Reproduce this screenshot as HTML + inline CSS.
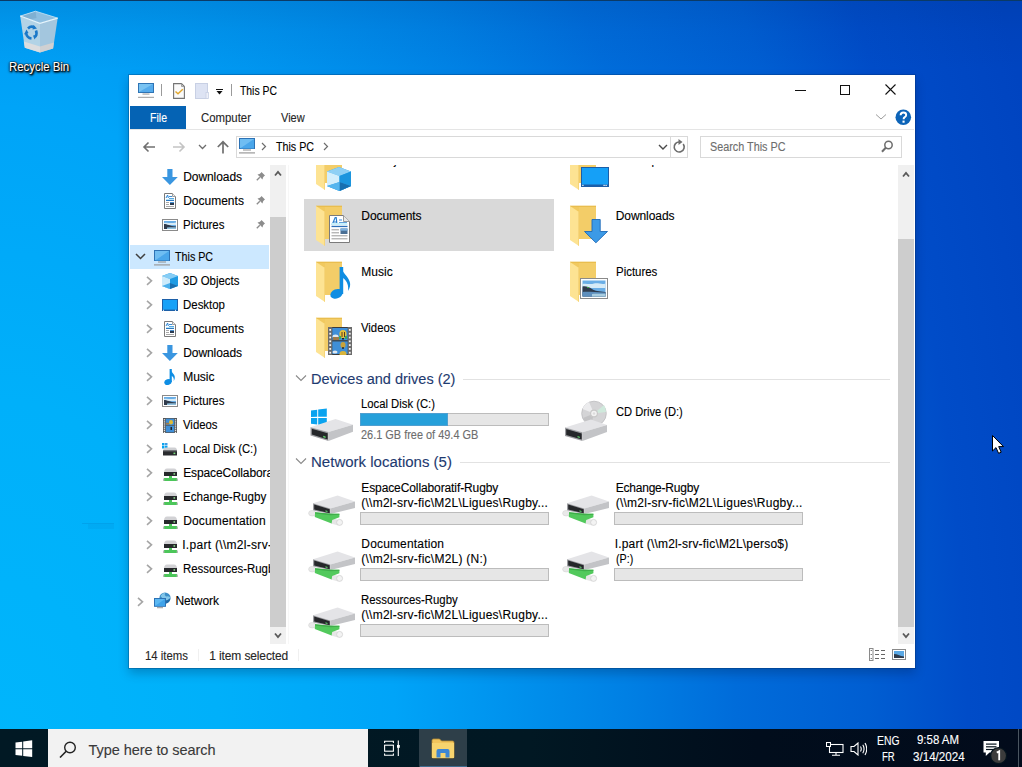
<!DOCTYPE html>
<html><head><meta charset="utf-8"><style>
html,body{margin:0;padding:0;width:1022px;height:767px;overflow:hidden;position:relative;font-family:"Liberation Sans",sans-serif;}
body{background:#0a7fd8;}
.abs{position:absolute;}
.tx{position:absolute;line-height:1;white-space:nowrap;font-family:"Liberation Sans",sans-serif;-webkit-text-stroke:0.12px currentColor;}
.clipx{position:absolute;top:0;height:767px;overflow:hidden;}
.clipy{position:absolute;left:0;width:1022px;height:600px;overflow:hidden;}
#bg{position:absolute;left:0;top:0;width:1022px;height:729px;
 background:linear-gradient(180deg,rgba(0,30,80,0.10) 0px,rgba(0,30,80,0.04) 30px,rgba(0,30,80,0) 70px),radial-gradient(1100px 1833px at 0px 767px,rgb(0,182,252) 0%,rgb(0,176,250) 20%,rgb(0,170,249) 28%,rgb(0,164,248) 36%,rgb(0,140,234) 50%,rgb(0,128,228) 57%,rgb(0,108,218) 67%,rgb(0,94,210) 79%,rgb(0,76,200) 88%,rgb(0,68,192) 100%);}
#win{position:absolute;left:129px;top:75px;width:786px;height:593px;background:#fff;box-shadow:0 0 0 1px rgba(0,40,90,0.28),0 5px 10px rgba(0,20,60,0.28);}
#taskbar{position:absolute;left:0;top:729px;width:1022px;height:38px;background:linear-gradient(90deg,#011924 0%,#011823 52%,#010d1c 74%,#020b1b 100%);}
#topline{position:absolute;left:0;top:0;width:1022px;height:1px;background:#0b3a66;}

</style></head><body>
<div id="bg"></div>
<div id="topline"></div>
<div class="abs" style="left:82px;top:523px;width:32px;height:1px;background:rgba(0,60,130,0.12)"></div>
<div class="abs" style="left:88px;top:524px;width:26px;height:5px;background:rgba(0,60,130,0.06)"></div>
<div id="win"></div>
<div id="taskbar"></div>
<!-- ribbon -->
<div class="abs" style="left:130px;top:106px;width:56px;height:23px;background:#0563b4"></div>
<div class="abs" style="left:130px;top:129px;width:784px;height:1px;background:#e5e5e5"></div>
<!-- address box -->
<div class="abs" style="left:236px;top:136px;width:450px;height:20px;border:1px solid #d9d9d9"></div>
<div class="abs" style="left:670px;top:137px;width:1px;height:20px;background:#d9d9d9"></div>
<div class="abs" style="left:700px;top:136px;width:200px;height:20px;border:1px solid #d9d9d9"></div>
<!-- nav scrollbar -->
<div class="abs" style="left:270px;top:165px;width:16px;height:479px;background:#f0f0f0"></div>
<div class="abs" style="left:270px;top:217px;width:16px;height:410px;background:#cdcdcd"></div>
<div class="abs" style="left:288px;top:165px;width:1px;height:479px;background:#f7f7f7"></div>
<!-- right scrollbar -->
<div class="abs" style="left:898px;top:165px;width:16px;height:479px;background:#f0f0f0"></div>
<div class="abs" style="left:898px;top:239px;width:16px;height:388px;background:#cdcdcd"></div>
<!-- nav selection -->
<div class="abs" style="left:130px;top:245px;width:139px;height:24px;background:#cce8ff"></div>
<!-- selected tile -->
<div class="abs" style="left:304px;top:199px;width:250px;height:52px;background:#d9d9d9"></div>
<!-- group lines -->
<div class="abs" style="left:463px;top:379px;width:427px;height:1px;background:#e2e2e2"></div>
<div class="abs" style="left:460px;top:462px;width:430px;height:1px;background:#e2e2e2"></div>
<!-- bars -->
<div class="abs" style="left:360px;top:413px;width:187px;height:11px;border:1px solid #bcbcbc;background:#e6e6e6"></div>
<div class="abs" style="left:360px;top:413px;width:88px;height:13px;background:#26a0da;box-shadow:inset 0 0 0 1px #4f9fd0"></div>
<div class="abs" style="left:360px;top:512px;width:187px;height:11px;border:1px solid #bcbcbc;background:#e6e6e6"></div>
<div class="abs" style="left:614px;top:512px;width:187px;height:11px;border:1px solid #bcbcbc;background:#e6e6e6"></div>
<div class="abs" style="left:360px;top:568px;width:187px;height:11px;border:1px solid #bcbcbc;background:#e6e6e6"></div>
<div class="abs" style="left:614px;top:568px;width:187px;height:11px;border:1px solid #bcbcbc;background:#e6e6e6"></div>
<div class="abs" style="left:360px;top:624px;width:187px;height:11px;border:1px solid #bcbcbc;background:#e6e6e6"></div>
<!-- status separators -->
<div class="abs" style="left:198px;top:649px;width:1px;height:12px;background:#f0f0f0"></div>
<div class="abs" style="left:298px;top:649px;width:1px;height:12px;background:#f0f0f0"></div>
<!-- taskbar -->
<div class="abs" style="left:48px;top:729px;width:320px;height:38px;background:#f2f2f2"></div>
<div class="abs" style="left:419px;top:729px;width:48px;height:38px;background:#2e3f49"></div>

<svg class="abs" style="left:138px;top:82px;" width="16" height="17" viewBox="0 0 16 17">
      <rect x="0.5" y="1.5" width="15" height="9" fill="#79c3f2" stroke="#2f74b5"/>
      <polygon points="1,10 15,2 15,10" fill="#55abec"/>
      <rect x="4.5" y="11.6" width="7" height="0.9" fill="#8d8d8d"/>
      <rect x="0" y="14.8" width="16" height="1" fill="#9a9a9a"/></svg>
<svg class="abs" style="left:161px;top:84px;" width="1" height="12" viewBox="0 0 1 12"><rect width="1" height="12" fill="#9a9a9a"/></svg>
<svg class="abs" style="left:173px;top:83px;" width="13" height="17" viewBox="0 0 13 17">
      <path d="M0.6 0.6 H8.5 L11.4 3.5 V15.4 H0.6 Z" fill="#fafafa" stroke="#737373" stroke-width="1.1"/>
      <path d="M8.5 0.6 V3.5 H11.4" fill="none" stroke="#9a9a9a" stroke-width="0.9"/>
      <path d="M2.5 8.5 L5 10.8 L9.8 6.2" fill="none" stroke="#e0a52a" stroke-width="1.4"/></svg>
<svg class="abs" style="left:195px;top:83px;" width="14" height="17" viewBox="0 0 14 17">
      <rect x="0.5" y="0.5" width="12" height="15" fill="#dde3f3" stroke="#c8d0e4"/>
      <rect x="11" y="9.5" width="2.5" height="6" fill="#eef0f8" stroke="#c8d0e4" stroke-width="0.8"/></svg>
<svg class="abs" style="left:215px;top:87px;" width="9" height="9" viewBox="0 0 9 9"><rect x="1" y="2" width="7" height="1" fill="#111"/><polygon points="1.5,4 7.5,4 4.5,7.6" fill="#111"/></svg>
<svg class="abs" style="left:231px;top:84px;" width="1" height="12" viewBox="0 0 1 12"><rect width="1" height="12" fill="#9a9a9a"/></svg>
<svg class="abs" style="left:795px;top:89px;" width="11" height="2" viewBox="0 0 11 2"><rect x="0" y="1" width="11" height="1" fill="#111"/></svg>
<svg class="abs" style="left:839px;top:84px;" width="12" height="12" viewBox="0 0 12 12"><rect x="1.5" y="1.5" width="9" height="9" fill="none" stroke="#111"/></svg>
<svg class="abs" style="left:884px;top:83px;" width="13" height="13" viewBox="0 0 13 13"><path d="M1.5 1.5 L11.5 11.5 M11.5 1.5 L1.5 11.5" stroke="#111" stroke-width="1.1"/></svg>
<svg class="abs" style="left:875px;top:113px;" width="12" height="8" viewBox="0 0 12 8"><path d="M1 1.5 L6 6 L11 1.5" fill="none" stroke="#9c9c9c" stroke-width="1"/></svg>
<svg class="abs" style="left:895px;top:109px;" width="17" height="17" viewBox="0 0 17 17"><circle cx="8.3" cy="8.3" r="7.8" fill="#0d64b8"/>
      <path d="M5.6 6.2 Q5.6 3.5 8.4 3.5 Q11.2 3.5 11.2 6 Q11.2 7.5 9.5 8.4 Q8.6 9 8.6 10.3" fill="none" stroke="#fff" stroke-width="1.9"/>
      <rect x="7.5" y="11.6" width="2.1" height="2.1" fill="#fff"/></svg>
<svg class="abs" style="left:142px;top:141px;" width="14" height="12" viewBox="0 0 14 12"><path d="M13 6 H2 M6.5 1.5 L2 6 L6.5 10.5" fill="none" stroke="#707070" stroke-width="1.6"/></svg>
<svg class="abs" style="left:172px;top:141px;" width="14" height="12" viewBox="0 0 14 12"><path d="M1 6 H12 M7.5 1.5 L12 6 L7.5 10.5" fill="none" stroke="#c4c4c4" stroke-width="1.6"/></svg>
<svg class="abs" style="left:198px;top:144px;" width="9" height="6" viewBox="0 0 9 6"><path d="M1 1 L4.5 4.5 L8 1" fill="none" stroke="#6d6d6d" stroke-width="1.3"/></svg>
<svg class="abs" style="left:216px;top:140px;" width="14" height="14" viewBox="0 0 14 14"><path d="M7 13.5 V2 M1.8 7 L7 1.8 L12.2 7" fill="none" stroke="#707070" stroke-width="1.7"/></svg>
<svg class="abs" style="left:239px;top:138px;" width="16" height="16" viewBox="0 0 16 16">
    <rect x="0.5" y="0.5" width="15" height="10" fill="#6fbdf2" stroke="#2d72b5"/>
    <polygon points="1,10.5 15,1 15,10.5" fill="#4aa6ea"/>
    <rect x="4" y="11.5" width="8" height="1" fill="#8d8d8d"/>
    <rect x="0" y="14.3" width="16" height="1.2" fill="#9a9a9a"/>
    </svg>
<svg class="abs" style="left:261px;top:142px;" width="6" height="9" viewBox="0 0 6 9"><path d="M1 1 L4.5 4.5 L1 8" fill="none" stroke="#6d6d6d" stroke-width="1.2"/></svg>
<svg class="abs" style="left:323px;top:142px;" width="6" height="9" viewBox="0 0 6 9"><path d="M1 1 L4.5 4.5 L1 8" fill="none" stroke="#6d6d6d" stroke-width="1.2"/></svg>
<svg class="abs" style="left:658px;top:144px;" width="10" height="7" viewBox="0 0 10 7"><path d="M1 1 L5 5 L9 1" fill="none" stroke="#4a4a4a" stroke-width="1.4"/></svg>
<svg class="abs" style="left:672px;top:139px;" width="15" height="16" viewBox="0 0 15 16"><path d="M11.2 5 A5 5 0 1 1 7.5 3" fill="none" stroke="#6d6d6d" stroke-width="1.6"/><polygon points="6.5,0 10.5,3 6.5,6" fill="#6d6d6d"/></svg>
<svg class="abs" style="left:881px;top:140px;" width="13" height="13" viewBox="0 0 13 13"><circle cx="7.5" cy="5" r="3.7" fill="none" stroke="#6d6d6d" stroke-width="1.5"/><path d="M5 7.5 L1 11.8" stroke="#6d6d6d" stroke-width="2"/></svg>
<svg class="abs" style="left:274px;top:170px;" width="8" height="7" viewBox="0 0 8 7"><path d="M1 5.5 L4 2 L7 5.5" fill="none" stroke="#5a5a5a" stroke-width="1.8"/></svg>
<svg class="abs" style="left:274px;top:632px;" width="8" height="7" viewBox="0 0 8 7"><path d="M1 1.5 L4 5 L7 1.5" fill="none" stroke="#5a5a5a" stroke-width="1.8"/></svg>
<svg class="abs" style="left:901.5px;top:170.5px;" width="8" height="7" viewBox="0 0 8 7"><path d="M1 5.5 L4 2 L7 5.5" fill="none" stroke="#5a5a5a" stroke-width="1.8"/></svg>
<svg class="abs" style="left:902px;top:632px;" width="8" height="7" viewBox="0 0 8 7"><path d="M1 1.5 L4 5 L7 1.5" fill="none" stroke="#5a5a5a" stroke-width="1.8"/></svg>
<svg class="abs" style="left:162px;top:169px;" width="16" height="16" viewBox="0 0 16 16">
    <path d="M5.3 0 H10.5 V8 H15.8 L7.9 16 L0 8 H5.3 Z" fill="#3a96e0"/>
    </svg>
<svg class="abs" style="left:164px;top:193px;" width="12" height="16" viewBox="0 0 12 16">
    <path d="M0.5 0.5 H8.5 L11.5 3.5 V15.5 H0.5 Z" fill="#fff" stroke="#7a7a7a"/>
    <path d="M8.5 0.5 V3.5 H11.5" fill="#eee" stroke="#a0a0a0" stroke-width="1"/>
    <path d="M2 5 L3.6 2 L4.4 5" stroke="#2a86d8" stroke-width="1" fill="none"/>
    <rect x="5" y="3" width="3" height="1" fill="#3d8bd3"/>
    <rect x="5" y="5" width="5" height="1" fill="#5aa8e0"/>
    <rect x="2" y="6" width="8" height="1" fill="#b8e4f8"/>
    <rect x="2" y="7" width="8" height="1" fill="#2c78c0"/>
    <rect x="2" y="9" width="3" height="1" fill="#a8a8a8"/>
    <rect x="2" y="11" width="3" height="1" fill="#a8a8a8"/>
    <rect x="6" y="9" width="4" height="1" fill="#4a90d0"/>
    <rect x="6" y="10" width="4" height="2" fill="#2a3a50"/>
    <rect x="2" y="13" width="8" height="1" fill="#a8a8a8"/>
    </svg>
<svg class="abs" style="left:162px;top:219px;" width="16" height="12" viewBox="0 0 16 12">
    <rect x="0.5" y="0.5" width="15" height="11" fill="#fff" stroke="#8a8a8a"/>
    <rect x="2" y="2" width="12" height="8" fill="#6aaee6"/>
    <path d="M2 4 C5 3 9 5 14 3.5 V6 H2 Z" fill="#d6ebf7"/>
    <path d="M2 5 C5 5 8 7 14 7.5 V10 H2 Z" fill="#2f3b4c"/>
    <path d="M5 8.5 C9 8 11 8.3 14 8.2 V10 H5 Z" fill="#8fbfdc"/>
    </svg>
<svg class="abs" style="left:256px;top:171px;" width="10" height="10" viewBox="0 0 10 10">
    <path d="M5.5 1 L9 4.5 L8 5.2 L7 6.5 L6.5 8.5 L1.5 3.5 L3.5 3 L4.8 2 Z" fill="#8c8c8c"/>
    <path d="M3.8 6.2 L0.8 9.2" stroke="#8c8c8c" stroke-width="1.3"/>
    </svg>
<svg class="abs" style="left:256px;top:195px;" width="10" height="10" viewBox="0 0 10 10">
    <path d="M5.5 1 L9 4.5 L8 5.2 L7 6.5 L6.5 8.5 L1.5 3.5 L3.5 3 L4.8 2 Z" fill="#8c8c8c"/>
    <path d="M3.8 6.2 L0.8 9.2" stroke="#8c8c8c" stroke-width="1.3"/>
    </svg>
<svg class="abs" style="left:256px;top:219px;" width="10" height="10" viewBox="0 0 10 10">
    <path d="M5.5 1 L9 4.5 L8 5.2 L7 6.5 L6.5 8.5 L1.5 3.5 L3.5 3 L4.8 2 Z" fill="#8c8c8c"/>
    <path d="M3.8 6.2 L0.8 9.2" stroke="#8c8c8c" stroke-width="1.3"/>
    </svg>
<svg class="abs" style="left:135px;top:253px;" width="11" height="7" viewBox="0 0 11 7"><path d="M1 1 L5.5 5.5 L10 1" fill="none" stroke="#404040" stroke-width="1.5"/></svg>
<svg class="abs" style="left:154px;top:249.5px;" width="16" height="16" viewBox="0 0 16 16">
    <rect x="0.5" y="0.5" width="15" height="10" fill="#6fbdf2" stroke="#2d72b5"/>
    <polygon points="1,10.5 15,1 15,10.5" fill="#4aa6ea"/>
    <rect x="4" y="11.5" width="8" height="1" fill="#8d8d8d"/>
    <rect x="0" y="14.3" width="16" height="1.2" fill="#9a9a9a"/>
    </svg>
<svg class="abs" style="left:145.5px;top:276.4px;" width="7" height="10" viewBox="0 0 7 10"><path d="M1 0.8 L5.5 4.8 L1 8.8" fill="none" stroke="#a6a6a6" stroke-width="1.6"/></svg>
<svg class="abs" style="left:145.5px;top:300.4px;" width="7" height="10" viewBox="0 0 7 10"><path d="M1 0.8 L5.5 4.8 L1 8.8" fill="none" stroke="#a6a6a6" stroke-width="1.6"/></svg>
<svg class="abs" style="left:145.5px;top:324.4px;" width="7" height="10" viewBox="0 0 7 10"><path d="M1 0.8 L5.5 4.8 L1 8.8" fill="none" stroke="#a6a6a6" stroke-width="1.6"/></svg>
<svg class="abs" style="left:145.5px;top:348.4px;" width="7" height="10" viewBox="0 0 7 10"><path d="M1 0.8 L5.5 4.8 L1 8.8" fill="none" stroke="#a6a6a6" stroke-width="1.6"/></svg>
<svg class="abs" style="left:145.5px;top:372.4px;" width="7" height="10" viewBox="0 0 7 10"><path d="M1 0.8 L5.5 4.8 L1 8.8" fill="none" stroke="#a6a6a6" stroke-width="1.6"/></svg>
<svg class="abs" style="left:145.5px;top:396.4px;" width="7" height="10" viewBox="0 0 7 10"><path d="M1 0.8 L5.5 4.8 L1 8.8" fill="none" stroke="#a6a6a6" stroke-width="1.6"/></svg>
<svg class="abs" style="left:145.5px;top:420.4px;" width="7" height="10" viewBox="0 0 7 10"><path d="M1 0.8 L5.5 4.8 L1 8.8" fill="none" stroke="#a6a6a6" stroke-width="1.6"/></svg>
<svg class="abs" style="left:145.5px;top:444.4px;" width="7" height="10" viewBox="0 0 7 10"><path d="M1 0.8 L5.5 4.8 L1 8.8" fill="none" stroke="#a6a6a6" stroke-width="1.6"/></svg>
<svg class="abs" style="left:145.5px;top:468.4px;" width="7" height="10" viewBox="0 0 7 10"><path d="M1 0.8 L5.5 4.8 L1 8.8" fill="none" stroke="#a6a6a6" stroke-width="1.6"/></svg>
<svg class="abs" style="left:145.5px;top:492.4px;" width="7" height="10" viewBox="0 0 7 10"><path d="M1 0.8 L5.5 4.8 L1 8.8" fill="none" stroke="#a6a6a6" stroke-width="1.6"/></svg>
<svg class="abs" style="left:145.5px;top:516.4px;" width="7" height="10" viewBox="0 0 7 10"><path d="M1 0.8 L5.5 4.8 L1 8.8" fill="none" stroke="#a6a6a6" stroke-width="1.6"/></svg>
<svg class="abs" style="left:145.5px;top:540.4px;" width="7" height="10" viewBox="0 0 7 10"><path d="M1 0.8 L5.5 4.8 L1 8.8" fill="none" stroke="#a6a6a6" stroke-width="1.6"/></svg>
<svg class="abs" style="left:145.5px;top:564.4px;" width="7" height="10" viewBox="0 0 7 10"><path d="M1 0.8 L5.5 4.8 L1 8.8" fill="none" stroke="#a6a6a6" stroke-width="1.6"/></svg>
<svg class="abs" style="left:162px;top:273px;" width="16" height="16" viewBox="0 0 16 16">
    <polygon points="8,0 16,3 16,13 8,16 0,13 0,3" fill="#1f9be3"/>
    <polygon points="0,3 8,0 16,3 8,6" fill="#86cdf5"/>
    <polygon points="0,3 8,6 8,16 0,13" fill="#cdebfb"/>
    <polygon points="0,13 8,10 8,16" fill="#4cb0ec"/>
    <polygon points="8,10 16,13 8,16" fill="#1b6eae"/>
    </svg>
<svg class="abs" style="left:162px;top:299px;" width="16" height="12" viewBox="0 0 16 12">
    <rect x="0" y="0" width="16" height="12" fill="#1d60a8"/>
    <rect x="1" y="1" width="14" height="9.6" fill="#17a1f7"/>
    <rect x="1" y="10.8" width="1" height="1" fill="#fff"/><rect x="13" y="10.8" width="1" height="1" fill="#fff"/>
    </svg>
<svg class="abs" style="left:164px;top:321px;" width="12" height="16" viewBox="0 0 12 16">
    <path d="M0.5 0.5 H8.5 L11.5 3.5 V15.5 H0.5 Z" fill="#fff" stroke="#7a7a7a"/>
    <path d="M8.5 0.5 V3.5 H11.5" fill="#eee" stroke="#a0a0a0" stroke-width="1"/>
    <path d="M2 5 L3.6 2 L4.4 5" stroke="#2a86d8" stroke-width="1" fill="none"/>
    <rect x="5" y="3" width="3" height="1" fill="#3d8bd3"/>
    <rect x="5" y="5" width="5" height="1" fill="#5aa8e0"/>
    <rect x="2" y="6" width="8" height="1" fill="#b8e4f8"/>
    <rect x="2" y="7" width="8" height="1" fill="#2c78c0"/>
    <rect x="2" y="9" width="3" height="1" fill="#a8a8a8"/>
    <rect x="2" y="11" width="3" height="1" fill="#a8a8a8"/>
    <rect x="6" y="9" width="4" height="1" fill="#4a90d0"/>
    <rect x="6" y="10" width="4" height="2" fill="#2a3a50"/>
    <rect x="2" y="13" width="8" height="1" fill="#a8a8a8"/>
    </svg>
<svg class="abs" style="left:162px;top:345px;" width="16" height="16" viewBox="0 0 16 16">
    <path d="M5.3 0 H10.5 V8 H15.8 L7.9 16 L0 8 H5.3 Z" fill="#3a96e0"/>
    </svg>
<svg class="abs" style="left:164px;top:369px;" width="12" height="16" viewBox="0 0 12 16">
    <ellipse cx="4" cy="13" rx="3.8" ry="2.8" transform="rotate(-20 4 13)" fill="#0e8ee4"/>
    <rect x="5.6" y="0" width="2.2" height="13" fill="#0e8ee4"/>
    <path d="M6.5 0.5 C7.5 3 9 4 10.2 6 C11.2 8 11 10 9.7 12 C10.2 9.5 9.5 7.5 7 6.5 Z" fill="#0e8ee4"/>
    </svg>
<svg class="abs" style="left:162px;top:395px;" width="16" height="12" viewBox="0 0 16 12">
    <rect x="0.5" y="0.5" width="15" height="11" fill="#fff" stroke="#8a8a8a"/>
    <rect x="2" y="2" width="12" height="8" fill="#6aaee6"/>
    <path d="M2 4 C5 3 9 5 14 3.5 V6 H2 Z" fill="#d6ebf7"/>
    <path d="M2 5 C5 5 8 7 14 7.5 V10 H2 Z" fill="#2f3b4c"/>
    <path d="M5 8.5 C9 8 11 8.3 14 8.2 V10 H5 Z" fill="#8fbfdc"/>
    </svg>
<svg class="abs" style="left:163px;top:418px;" width="14" height="15" viewBox="0 0 14 15">
    <rect x="0" y="0" width="14" height="15" fill="#555"/>
    <rect x="2.8" y="0.7" width="8.4" height="6.4" fill="#3f8fd8"/>
    <rect x="2.8" y="7.8" width="8.4" height="6.5" fill="#3f8fd8"/>
    <ellipse cx="8" cy="4.3" rx="2" ry="2.2" fill="#e2bb35"/>
    <rect x="3" y="4.8" width="3" height="1.8" fill="#a07a48"/>
    <rect x="7.5" y="9" width="1.5" height="3" fill="#222"/>
    <rect x="0.8" y="1.2" width="1.3" height="1.2" fill="#f0f0f0"/><rect x="11.9" y="1.2" width="1.3" height="1.2" fill="#f0f0f0"/><rect x="0.8" y="3.3" width="1.3" height="1.2" fill="#f0f0f0"/><rect x="11.9" y="3.3" width="1.3" height="1.2" fill="#f0f0f0"/><rect x="0.8" y="5.4" width="1.3" height="1.2" fill="#f0f0f0"/><rect x="11.9" y="5.4" width="1.3" height="1.2" fill="#f0f0f0"/><rect x="0.8" y="7.5" width="1.3" height="1.2" fill="#f0f0f0"/><rect x="11.9" y="7.5" width="1.3" height="1.2" fill="#f0f0f0"/><rect x="0.8" y="9.6" width="1.3" height="1.2" fill="#f0f0f0"/><rect x="11.9" y="9.6" width="1.3" height="1.2" fill="#f0f0f0"/><rect x="0.8" y="11.7" width="1.3" height="1.2" fill="#f0f0f0"/><rect x="11.9" y="11.7" width="1.3" height="1.2" fill="#f0f0f0"/><rect x="0.8" y="13.8" width="1.3" height="1.2" fill="#f0f0f0"/><rect x="11.9" y="13.8" width="1.3" height="1.2" fill="#f0f0f0"/>
    </svg>
<svg class="abs" style="left:162px;top:443px;" width="16" height="13" viewBox="0 0 16 13">
    <rect x="0" y="0" width="2.5" height="2.5" fill="#0aa3ef"/><rect x="3" y="0" width="2.5" height="2.5" fill="#3a9ee8"/>
    <rect x="0" y="3" width="2.5" height="2.5" fill="#0aa3ef"/><rect x="3" y="3" width="2.5" height="2.5" fill="#0aa3ef"/>
    <path d="M1 8 Q1.5 4.5 4 4.5 H12.5 Q15 4.5 15 8 Z" fill="#cfd0d3"/>
    <rect x="1" y="7.6" width="14" height="5" rx="0.5" fill="#2a2c2f"/>
    <rect x="1" y="7.6" width="14" height="0.8" fill="#6a6c70"/>
    <rect x="11.5" y="9.6" width="1.8" height="1.5" fill="#7be07f"/>
    </svg>
<svg class="abs" style="left:163px;top:468px;" width="15" height="13" viewBox="0 0 15 13">
    <path d="M1 5 Q1 0.5 4 0.5 H11 Q14 0.5 14 5 Z" fill="#d2d2d5"/>
    <rect x="1" y="4" width="13" height="4" fill="#26282b"/>
    <rect x="10.5" y="5.2" width="1.6" height="1.5" fill="#8ee08f"/>
    <rect x="6" y="8" width="3" height="2.5" fill="#4cc65a"/>
    <rect x="1" y="10" width="13" height="3" fill="#4cc65a"/>
    <rect x="0" y="10.5" width="1.3" height="2.5" fill="#bbb"/><rect x="13.7" y="10.5" width="1.3" height="2.5" fill="#bbb"/>
    </svg>
<svg class="abs" style="left:163px;top:492px;" width="15" height="13" viewBox="0 0 15 13">
    <path d="M1 5 Q1 0.5 4 0.5 H11 Q14 0.5 14 5 Z" fill="#d2d2d5"/>
    <rect x="1" y="4" width="13" height="4" fill="#26282b"/>
    <rect x="10.5" y="5.2" width="1.6" height="1.5" fill="#8ee08f"/>
    <rect x="6" y="8" width="3" height="2.5" fill="#4cc65a"/>
    <rect x="1" y="10" width="13" height="3" fill="#4cc65a"/>
    <rect x="0" y="10.5" width="1.3" height="2.5" fill="#bbb"/><rect x="13.7" y="10.5" width="1.3" height="2.5" fill="#bbb"/>
    </svg>
<svg class="abs" style="left:163px;top:516px;" width="15" height="13" viewBox="0 0 15 13">
    <path d="M1 5 Q1 0.5 4 0.5 H11 Q14 0.5 14 5 Z" fill="#d2d2d5"/>
    <rect x="1" y="4" width="13" height="4" fill="#26282b"/>
    <rect x="10.5" y="5.2" width="1.6" height="1.5" fill="#8ee08f"/>
    <rect x="6" y="8" width="3" height="2.5" fill="#4cc65a"/>
    <rect x="1" y="10" width="13" height="3" fill="#4cc65a"/>
    <rect x="0" y="10.5" width="1.3" height="2.5" fill="#bbb"/><rect x="13.7" y="10.5" width="1.3" height="2.5" fill="#bbb"/>
    </svg>
<svg class="abs" style="left:163px;top:540px;" width="15" height="13" viewBox="0 0 15 13">
    <path d="M1 5 Q1 0.5 4 0.5 H11 Q14 0.5 14 5 Z" fill="#d2d2d5"/>
    <rect x="1" y="4" width="13" height="4" fill="#26282b"/>
    <rect x="10.5" y="5.2" width="1.6" height="1.5" fill="#8ee08f"/>
    <rect x="6" y="8" width="3" height="2.5" fill="#4cc65a"/>
    <rect x="1" y="10" width="13" height="3" fill="#4cc65a"/>
    <rect x="0" y="10.5" width="1.3" height="2.5" fill="#bbb"/><rect x="13.7" y="10.5" width="1.3" height="2.5" fill="#bbb"/>
    </svg>
<svg class="abs" style="left:163px;top:564px;" width="15" height="13" viewBox="0 0 15 13">
    <path d="M1 5 Q1 0.5 4 0.5 H11 Q14 0.5 14 5 Z" fill="#d2d2d5"/>
    <rect x="1" y="4" width="13" height="4" fill="#26282b"/>
    <rect x="10.5" y="5.2" width="1.6" height="1.5" fill="#8ee08f"/>
    <rect x="6" y="8" width="3" height="2.5" fill="#4cc65a"/>
    <rect x="1" y="10" width="13" height="3" fill="#4cc65a"/>
    <rect x="0" y="10.5" width="1.3" height="2.5" fill="#bbb"/><rect x="13.7" y="10.5" width="1.3" height="2.5" fill="#bbb"/>
    </svg>
<svg class="abs" style="left:137px;top:596.5px;" width="7" height="10" viewBox="0 0 7 10"><path d="M1 0.8 L5.5 4.8 L1 8.8" fill="none" stroke="#a6a6a6" stroke-width="1.6"/></svg>
<svg class="abs" style="left:153.5px;top:592px;" width="17" height="17" viewBox="0 0 17 17">
    <circle cx="11" cy="6" r="5.6" fill="#3d8fc8"/>
    <path d="M6.5 4 Q8 1 11 0.8 Q10 3 12 4.5 Q14.5 3.5 16.3 5.5 Q15 8 13 8.5 Q11.5 7 9.5 7.5 Z" fill="#8fd0ee" opacity="0.85"/>
    <path d="M16.3 6.5 Q16 10.5 12 11.5 L11.5 9 Z" fill="#1f6aa8"/>
    <rect x="0.5" y="6.5" width="11" height="7.8" fill="#5cb8f2" stroke="#2d72b5"/>
    <polygon points="1,14 11,7 11,14" fill="#3fa3ea"/>
    <rect x="3" y="15.3" width="6" height="0.9" fill="#8a8a8a"/>
    </svg>
<div class="clipy" style="top:165px;height:100px"><svg class="abs" style="left:315px;top:-17px;" width="40" height="44" viewBox="0 0 40 44">
    <rect x="1" y="1.8" width="26" height="33.2" fill="#f1c95f"/>
    <rect x="1" y="1.8" width="26" height="1.2" fill="#e9bd4e"/>
    <rect x="10" y="3" width="17" height="32" fill="#f3cd68"/>
    <polygon points="1,2 10,8 10,42 1,36" fill="#fde393"/>
    <polygon points="9,7.4 10,8 10,42 9,41.3" fill="#f6d57a"/>
    </svg><svg class="abs" style="left:327px;top:2px;" width="25" height="25" viewBox="0 0 25 25">
    <polygon points="12,0 24,4.5 24,19 12.5,24 0,19 0,4.5" fill="#29a3e6"/>
    <polygon points="0,4.5 12,0 24,4.5 12.5,9" fill="#8fd0f5"/>
    <polygon points="0,4.5 12.5,9 12.5,24 0,19" fill="#d3eefc"/>
    <polygon points="12.5,9 24,4.5 24,19 12.5,24" fill="#1b95de"/>
    <polygon points="0,19 12.5,15 24,19 12.5,24" fill="#3aa6e8"/>
    <polygon points="12.5,15 24,19 12.5,24" fill="#176fb0"/>
    <polygon points="0,19 12.5,15 12.5,24" fill="#55b5ee"/>
    </svg><svg class="abs" style="left:569px;top:-17px;" width="40" height="44" viewBox="0 0 40 44">
    <rect x="1" y="1.8" width="26" height="33.2" fill="#f1c95f"/>
    <rect x="1" y="1.8" width="26" height="1.2" fill="#e9bd4e"/>
    <rect x="10" y="3" width="17" height="32" fill="#f3cd68"/>
    <polygon points="1,2 10,8 10,42 1,36" fill="#fde393"/>
    <polygon points="9,7.4 10,8 10,42 9,41.3" fill="#f6d57a"/>
    </svg><svg class="abs" style="left:581px;top:2px;" width="28" height="20" viewBox="0 0 28 20">
    <rect x="0" y="0" width="28" height="20" fill="#1c5ea8"/>
    <rect x="1" y="1" width="26" height="16.5" fill="#15a0f7"/>
    <rect x="1.3" y="17.8" width="1.2" height="1.2" fill="#fff"/>
    <rect x="22.5" y="17.8" width="1.2" height="1.2" fill="#fff"/><rect x="24.5" y="17.8" width="1.2" height="1.2" fill="#fff"/>
    </svg></div>
<svg class="abs" style="left:315px;top:204px;" width="40" height="44" viewBox="0 0 40 44">
    <rect x="1" y="1.8" width="26" height="33.2" fill="#f1c95f"/>
    <rect x="1" y="1.8" width="26" height="1.2" fill="#e9bd4e"/>
    <rect x="10" y="3" width="17" height="32" fill="#f3cd68"/>
    <polygon points="1,2 10,8 10,42 1,36" fill="#fde393"/>
    <polygon points="9,7.4 10,8 10,42 9,41.3" fill="#f6d57a"/>
    </svg>
<svg class="abs" style="left:329px;top:215px;" width="21" height="28" viewBox="0 0 21 28">
    <path d="M0.5 0.5 H14.5 L20.5 6.5 V27.5 H0.5 Z" fill="#fff" stroke="#7b7b7b" stroke-width="1"/>
    <path d="M14.5 0.5 V6.5 H20.5" fill="#e8e8e8" stroke="#9a9a9a" stroke-width="1"/>
    <path d="M3 10 L6.2 2.5 L7.2 2.5 L8 10 M4.3 7 H7.6" fill="none" stroke="#2a7fd0" stroke-width="1.2"/>
    <rect x="10" y="4.5" width="3" height="1" fill="#3d8bd3"/>
    <rect x="10" y="7.2" width="8" height="1" fill="#3d8bd3"/>
    <rect x="2.3" y="8" width="16" height="2" fill="#c7f0fb"/>
    <rect x="2.5" y="10.8" width="16" height="1.3" fill="#2c6fb8"/>
    <rect x="2.5" y="14.3" width="7.5" height="1" fill="#9a9a9a"/>
    <rect x="2.5" y="17.3" width="7.5" height="1" fill="#9a9a9a"/>
    <rect x="11.5" y="13.5" width="7" height="5.5" fill="#4a6f94"/>
    <rect x="11.5" y="13.5" width="7" height="2.2" fill="#7db2e0"/>
    <rect x="2.5" y="20.3" width="16" height="1" fill="#9a9a9a"/>
    <rect x="2.5" y="23.3" width="16" height="1" fill="#9a9a9a"/>
    </svg>
<svg class="abs" style="left:569px;top:204px;" width="40" height="44" viewBox="0 0 40 44">
    <rect x="1" y="1.8" width="26" height="33.2" fill="#f1c95f"/>
    <rect x="1" y="1.8" width="26" height="1.2" fill="#e9bd4e"/>
    <rect x="10" y="3" width="17" height="32" fill="#f3cd68"/>
    <polygon points="1,2 10,8 10,42 1,36" fill="#fde393"/>
    <polygon points="9,7.4 10,8 10,42 9,41.3" fill="#f6d57a"/>
    </svg>
<svg class="abs" style="left:583.5px;top:219px;" width="24" height="25" viewBox="0 0 24 25">
    <path d="M8 0.5 H16.2 V12.5 H23.5 L11.9 23.8 L0.5 12.5 H8 Z" fill="#3c9ae6" stroke="#1d6ab8" stroke-width="0.9"/>
    </svg>
<svg class="abs" style="left:315px;top:260px;" width="40" height="44" viewBox="0 0 40 44">
    <rect x="1" y="1.8" width="26" height="33.2" fill="#f1c95f"/>
    <rect x="1" y="1.8" width="26" height="1.2" fill="#e9bd4e"/>
    <rect x="10" y="3" width="17" height="32" fill="#f3cd68"/>
    <polygon points="1,2 10,8 10,42 1,36" fill="#fde393"/>
    <polygon points="9,7.4 10,8 10,42 9,41.3" fill="#f6d57a"/>
    </svg>
<svg class="abs" style="left:330px;top:266px;" width="24" height="34" viewBox="0 0 24 34">
    <ellipse cx="6.5" cy="27.8" rx="6.3" ry="4.6" transform="rotate(-22 6.5 27.8)" fill="#0f8de2"/>
    <rect x="9.6" y="1" width="3.6" height="27" fill="#0f8de2"/>
    <path d="M11 1.5 C12.5 5 14 7 16.5 10 C20 14.5 22 19 18 25 C18.8 20 17.5 15.5 13 12 Z" fill="#0f8de2"/>
    </svg>
<svg class="abs" style="left:569px;top:260px;" width="40" height="44" viewBox="0 0 40 44">
    <rect x="1" y="1.8" width="26" height="33.2" fill="#f1c95f"/>
    <rect x="1" y="1.8" width="26" height="1.2" fill="#e9bd4e"/>
    <rect x="10" y="3" width="17" height="32" fill="#f3cd68"/>
    <polygon points="1,2 10,8 10,42 1,36" fill="#fde393"/>
    <polygon points="9,7.4 10,8 10,42 9,41.3" fill="#f6d57a"/>
    </svg>
<svg class="abs" style="left:580px;top:278px;" width="28" height="21" viewBox="0 0 28 21">
    <rect x="0.5" y="0.5" width="27" height="20" fill="#fff" stroke="#8a8a8a"/>
    <rect x="2.5" y="2.5" width="23" height="16" fill="#6aaee6"/>
    <path d="M2.5 6 C6 5 10 7 14 5.5 C18 4.5 22 7 25.5 5.5 V10 H2.5 Z" fill="#d6ebf7"/>
    <path d="M2.5 8.5 C6 8 9 9 12 11 C15 13 19 13.5 25.5 14 V18.5 H2.5 Z" fill="#2f3b4c"/>
    <path d="M2.5 14 C8 13.5 16 14.5 25.5 14.5 V18.5 H2.5 Z" fill="#5e8fbd"/>
    <path d="M12 16 C16 15.5 20 16 25.5 15.8 V18.5 H12 Z" fill="#a9cde0"/>
    <rect x="7" y="9" width="2" height="1" fill="#3aa046"/>
    </svg>
<svg class="abs" style="left:315px;top:316px;" width="40" height="44" viewBox="0 0 40 44">
    <rect x="1" y="1.8" width="26" height="33.2" fill="#f1c95f"/>
    <rect x="1" y="1.8" width="26" height="1.2" fill="#e9bd4e"/>
    <rect x="10" y="3" width="17" height="32" fill="#f3cd68"/>
    <polygon points="1,2 10,8 10,42 1,36" fill="#fde393"/>
    <polygon points="9,7.4 10,8 10,42 9,41.3" fill="#f6d57a"/>
    </svg>
<svg class="abs" style="left:328px;top:327px;" width="24" height="28" viewBox="0 0 24 28">
    <rect x="0" y="0" width="24" height="28" fill="#3b3b3b"/>
    <rect x="0" y="0" width="4.3" height="28" fill="#6b6b6b"/>
    <rect x="19.7" y="0" width="4.3" height="28" fill="#6b6b6b"/>
    <rect x="1.3" y="2.0" width="1.8" height="1.8" fill="#f4f4f4"/><rect x="20.9" y="2.0" width="1.8" height="1.8" fill="#f4f4f4"/><rect x="1.3" y="5.8" width="1.8" height="1.8" fill="#f4f4f4"/><rect x="20.9" y="5.8" width="1.8" height="1.8" fill="#f4f4f4"/><rect x="1.3" y="9.6" width="1.8" height="1.8" fill="#f4f4f4"/><rect x="20.9" y="9.6" width="1.8" height="1.8" fill="#f4f4f4"/><rect x="1.3" y="13.4" width="1.8" height="1.8" fill="#f4f4f4"/><rect x="20.9" y="13.4" width="1.8" height="1.8" fill="#f4f4f4"/><rect x="1.3" y="17.2" width="1.8" height="1.8" fill="#f4f4f4"/><rect x="20.9" y="17.2" width="1.8" height="1.8" fill="#f4f4f4"/><rect x="1.3" y="21.0" width="1.8" height="1.8" fill="#f4f4f4"/><rect x="20.9" y="21.0" width="1.8" height="1.8" fill="#f4f4f4"/><rect x="1.3" y="24.8" width="1.8" height="1.8" fill="#f4f4f4"/><rect x="20.9" y="24.8" width="1.8" height="1.8" fill="#f4f4f4"/>
    <rect x="4.3" y="1" width="15.4" height="12.2" fill="#3f8fd8"/>
    <rect x="4.3" y="14.4" width="15.4" height="12.6" fill="#3f8fd8"/>
    <ellipse cx="15" cy="7" rx="3.6" ry="4" fill="#e6c23a"/>
    <rect x="13.5" y="5" width="1" height="5" fill="#5a3a20"/><rect x="16" y="5" width="1" height="5" fill="#5a3a20"/>
    <rect x="11" y="9" width="2" height="3" fill="#3aa860"/><rect x="17" y="9" width="2" height="3" fill="#3aa860"/>
    <rect x="14" y="11" width="2" height="1.5" fill="#222"/>
    <ellipse cx="15" cy="18" rx="2.5" ry="3" fill="#c9a23a"/>
    <rect x="14.3" y="20" width="1.4" height="2" fill="#222"/>
    <ellipse cx="15" cy="27" rx="3.5" ry="3" fill="#d8b43a"/>
    <ellipse cx="7.5" cy="9.5" rx="3" ry="2" fill="#dfe8f0"/>
    <rect x="5" y="10" width="6" height="3" fill="#a07a48"/>
    <ellipse cx="7" cy="25" rx="2.5" ry="1.5" fill="#dfe8f0"/>
    </svg>
<svg class="abs" style="left:295px;top:374px;" width="12" height="8" viewBox="0 0 12 8"><path d="M1 1.5 L6 6.5 L11 1.5" fill="none" stroke="#8a8a8a" stroke-width="1.1"/></svg>
<svg class="abs" style="left:295px;top:457px;" width="12" height="8" viewBox="0 0 12 8"><path d="M1 1.5 L6 6.5 L11 1.5" fill="none" stroke="#8a8a8a" stroke-width="1.1"/></svg>
<svg class="abs" style="left:310px;top:408px;" width="44" height="34" viewBox="0 0 44 34">
    <polygon points="1,2.6 7.2,1.8 7.2,8.8 1,8.9" fill="#0aa3ef"/>
    <polygon points="8.2,1.6 16.8,0.5 16.8,8.8 8.2,8.8" fill="#0aa3ef"/>
    <polygon points="1,9.9 7.2,9.9 7.2,16.6 1,15.8" fill="#0aa3ef"/>
    <polygon points="8.2,9.9 16.8,9.9 16.8,17.5 8.2,16.8" fill="#0aa3ef"/>
    
    <polygon points="0.5,19.3 25.5,11 43,16.8 18.5,24" fill="#e4e4e7"/>
    <polygon points="0.5,19.3 18.5,24 18.5,33 0.5,27.5" fill="#9d9ea2"/>
    <polygon points="18.5,24 43,16.8 43,23.8 18.5,33" fill="#c3c4c7"/>
    <polygon points="1.8,20.8 17.7,25.2 17.7,31.4 1.8,26.6" fill="#25272a"/>
    <polygon points="13.2,27.8 15.6,28.5 15.6,29.9 13.2,29.2" fill="#5fd36c"/>
    </svg>
<svg class="abs" style="left:563px;top:400px;" width="46" height="42" viewBox="0 0 46 42">
    <circle cx="31" cy="13.5" r="12.3" fill="#d4d4d6" stroke="#bdbdbf" stroke-width="0.8"/>
    <path d="M31 13.5 L41 5 A12.3 12.3 0 0 1 43 12 Z" fill="#cfe9dc"/>
    <path d="M31 13.5 L20 18 A12.3 12.3 0 0 0 28 25.5 Z" fill="#c3c3c5"/>
    <path d="M31 13.5 L26 2 A12.3 12.3 0 0 0 19.5 9 Z" fill="#ececee"/>
    <circle cx="31" cy="13.5" r="3.4" fill="#f2f2f2" stroke="#c8c8c8" stroke-width="1.2"/>
    <circle cx="31" cy="13.5" r="1.2" fill="#dcdcdc"/>
    <polygon points="2,27.5 28,19.5 44,25 19.5,32.3" fill="#e4e4e7"/>
    <polygon points="2,27.5 19.5,32.3 19.5,41 2,36" fill="#9d9ea2"/>
    <polygon points="19.5,32.3 44,25 44,32 19.5,41" fill="#c3c4c7"/>
    <polygon points="3.2,29 18.7,33.5 18.7,39.5 3.2,35" fill="#25272a"/>
    <polygon points="14.5,36 16.8,36.7 16.8,38 14.5,37.3" fill="#5fd36c"/>
    </svg>
<svg class="abs" style="left:308px;top:494px;" width="48" height="32" viewBox="0 0 48 32">
    <polygon points="5,9.2 29.6,1.4 47,7.4 22.4,14.6" fill="#e4e4e7"/>
    <polygon points="5,9.2 22.4,14.6 22.4,20 5,16.4" fill="#9d9ea2"/>
    <polygon points="22.4,14.6 47,7.4 47,14 22.4,20" fill="#c3c4c7"/>
    <polygon points="6.2,10.5 21.7,15.3 21.7,19.2 6.2,15.5" fill="#25272a"/>
    <polygon points="17.5,16.3 19.5,16.9 19.5,18 17.5,17.5" fill="#5fd36c"/>
    <ellipse cx="4.2" cy="19.2" rx="3.6" ry="2.8" fill="#e9e9e9" stroke="#d0d0d0" stroke-width="0.5"/>
    <path d="M23.5 26.8 L31 28.8" stroke="#e6e6e6" stroke-width="5.5" stroke-linecap="butt"/>
    <circle cx="31.6" cy="28.4" r="3" fill="#f3f3f3" stroke="#cdcdcd" stroke-width="0.7"/>
    <polygon points="7.1,18.2 22.4,19.8 31.4,19.8 31.4,23.3 24.2,26 23.6,29.6 6.8,22.9" fill="#52c95c"/>
    <polygon points="7.1,18.2 22.4,19.8 31.4,19.8 31.4,20.8 22.4,21.2 7,19.5" fill="#3fae4a"/>
    </svg>
<svg class="abs" style="left:562px;top:494px;" width="48" height="32" viewBox="0 0 48 32">
    <polygon points="5,9.2 29.6,1.4 47,7.4 22.4,14.6" fill="#e4e4e7"/>
    <polygon points="5,9.2 22.4,14.6 22.4,20 5,16.4" fill="#9d9ea2"/>
    <polygon points="22.4,14.6 47,7.4 47,14 22.4,20" fill="#c3c4c7"/>
    <polygon points="6.2,10.5 21.7,15.3 21.7,19.2 6.2,15.5" fill="#25272a"/>
    <polygon points="17.5,16.3 19.5,16.9 19.5,18 17.5,17.5" fill="#5fd36c"/>
    <ellipse cx="4.2" cy="19.2" rx="3.6" ry="2.8" fill="#e9e9e9" stroke="#d0d0d0" stroke-width="0.5"/>
    <path d="M23.5 26.8 L31 28.8" stroke="#e6e6e6" stroke-width="5.5" stroke-linecap="butt"/>
    <circle cx="31.6" cy="28.4" r="3" fill="#f3f3f3" stroke="#cdcdcd" stroke-width="0.7"/>
    <polygon points="7.1,18.2 22.4,19.8 31.4,19.8 31.4,23.3 24.2,26 23.6,29.6 6.8,22.9" fill="#52c95c"/>
    <polygon points="7.1,18.2 22.4,19.8 31.4,19.8 31.4,20.8 22.4,21.2 7,19.5" fill="#3fae4a"/>
    </svg>
<svg class="abs" style="left:308px;top:550px;" width="48" height="32" viewBox="0 0 48 32">
    <polygon points="5,9.2 29.6,1.4 47,7.4 22.4,14.6" fill="#e4e4e7"/>
    <polygon points="5,9.2 22.4,14.6 22.4,20 5,16.4" fill="#9d9ea2"/>
    <polygon points="22.4,14.6 47,7.4 47,14 22.4,20" fill="#c3c4c7"/>
    <polygon points="6.2,10.5 21.7,15.3 21.7,19.2 6.2,15.5" fill="#25272a"/>
    <polygon points="17.5,16.3 19.5,16.9 19.5,18 17.5,17.5" fill="#5fd36c"/>
    <ellipse cx="4.2" cy="19.2" rx="3.6" ry="2.8" fill="#e9e9e9" stroke="#d0d0d0" stroke-width="0.5"/>
    <path d="M23.5 26.8 L31 28.8" stroke="#e6e6e6" stroke-width="5.5" stroke-linecap="butt"/>
    <circle cx="31.6" cy="28.4" r="3" fill="#f3f3f3" stroke="#cdcdcd" stroke-width="0.7"/>
    <polygon points="7.1,18.2 22.4,19.8 31.4,19.8 31.4,23.3 24.2,26 23.6,29.6 6.8,22.9" fill="#52c95c"/>
    <polygon points="7.1,18.2 22.4,19.8 31.4,19.8 31.4,20.8 22.4,21.2 7,19.5" fill="#3fae4a"/>
    </svg>
<svg class="abs" style="left:562px;top:550px;" width="48" height="32" viewBox="0 0 48 32">
    <polygon points="5,9.2 29.6,1.4 47,7.4 22.4,14.6" fill="#e4e4e7"/>
    <polygon points="5,9.2 22.4,14.6 22.4,20 5,16.4" fill="#9d9ea2"/>
    <polygon points="22.4,14.6 47,7.4 47,14 22.4,20" fill="#c3c4c7"/>
    <polygon points="6.2,10.5 21.7,15.3 21.7,19.2 6.2,15.5" fill="#25272a"/>
    <polygon points="17.5,16.3 19.5,16.9 19.5,18 17.5,17.5" fill="#5fd36c"/>
    <ellipse cx="4.2" cy="19.2" rx="3.6" ry="2.8" fill="#e9e9e9" stroke="#d0d0d0" stroke-width="0.5"/>
    <path d="M23.5 26.8 L31 28.8" stroke="#e6e6e6" stroke-width="5.5" stroke-linecap="butt"/>
    <circle cx="31.6" cy="28.4" r="3" fill="#f3f3f3" stroke="#cdcdcd" stroke-width="0.7"/>
    <polygon points="7.1,18.2 22.4,19.8 31.4,19.8 31.4,23.3 24.2,26 23.6,29.6 6.8,22.9" fill="#52c95c"/>
    <polygon points="7.1,18.2 22.4,19.8 31.4,19.8 31.4,20.8 22.4,21.2 7,19.5" fill="#3fae4a"/>
    </svg>
<svg class="abs" style="left:308px;top:606px;" width="48" height="32" viewBox="0 0 48 32">
    <polygon points="5,9.2 29.6,1.4 47,7.4 22.4,14.6" fill="#e4e4e7"/>
    <polygon points="5,9.2 22.4,14.6 22.4,20 5,16.4" fill="#9d9ea2"/>
    <polygon points="22.4,14.6 47,7.4 47,14 22.4,20" fill="#c3c4c7"/>
    <polygon points="6.2,10.5 21.7,15.3 21.7,19.2 6.2,15.5" fill="#25272a"/>
    <polygon points="17.5,16.3 19.5,16.9 19.5,18 17.5,17.5" fill="#5fd36c"/>
    <ellipse cx="4.2" cy="19.2" rx="3.6" ry="2.8" fill="#e9e9e9" stroke="#d0d0d0" stroke-width="0.5"/>
    <path d="M23.5 26.8 L31 28.8" stroke="#e6e6e6" stroke-width="5.5" stroke-linecap="butt"/>
    <circle cx="31.6" cy="28.4" r="3" fill="#f3f3f3" stroke="#cdcdcd" stroke-width="0.7"/>
    <polygon points="7.1,18.2 22.4,19.8 31.4,19.8 31.4,23.3 24.2,26 23.6,29.6 6.8,22.9" fill="#52c95c"/>
    <polygon points="7.1,18.2 22.4,19.8 31.4,19.8 31.4,20.8 22.4,21.2 7,19.5" fill="#3fae4a"/>
    </svg>
<svg class="abs" style="left:869px;top:648px;" width="17" height="13" viewBox="0 0 17 13"><rect x="0.5" y="0.5" width="3.5" height="12" fill="none" stroke="#8a8a8a"/>
      <rect x="1.7" y="2" width="1" height="1" fill="#444"/><rect x="1.7" y="6" width="1" height="1" fill="#444"/><rect x="1.7" y="10" width="1" height="1" fill="#444"/>
      <rect x="6" y="2" width="4" height="1" fill="#666"/><rect x="12" y="2" width="4" height="1" fill="#666"/>
      <rect x="6" y="6" width="4" height="1" fill="#666"/><rect x="12" y="6" width="4" height="1" fill="#666"/>
      <rect x="6" y="10" width="4" height="1" fill="#666"/><rect x="12" y="10" width="4" height="1" fill="#666"/></svg>
<svg class="abs" style="left:892px;top:649px;" width="14" height="11" viewBox="0 0 14 11"><rect x="0.5" y="0.5" width="13" height="10" fill="#fff" stroke="#8a8a8a"/>
      <rect x="2" y="2" width="10" height="7" fill="#5aa8e4"/><path d="M2 5 C5 5 8 7 12 7.5 V9 H2 Z" fill="#2f3b4c"/></svg>
<svg class="abs" style="left:14px;top:6px;" width="50" height="50" viewBox="0 0 50 50">
      <polygon points="6.2,10.1 26,17.3 26,46.6 10.8,41.7" fill="#b2d3e6"/>
      <polygon points="26,17.3 43.7,12.1 39.1,42.4 26,46.6" fill="#a3c6de"/>
      <polygon points="6.2,10.1 21.5,5.2 43.7,12.1 26,17.3" fill="#8fbfe0"/>
      <polygon points="6.2,10.1 21.5,5.2 22.5,12 15,13.4" fill="#7fb0d2"/>
      <path d="M6.2 10.1 L26 17.3 L43.7 12.1" fill="none" stroke="#e6f4fb" stroke-width="1.1"/>
      <path d="M6.2 10.1 L21.5 5.2 L43.7 12.1" fill="none" stroke="#c8e6f6" stroke-width="0.8"/>
      <polygon points="9.8,35.5 26,40.5 26,46.6 10.8,41.7" fill="#dcdddf"/>
      <polygon points="26,40.5 39.9,36.6 39.1,42.4 26,46.6" fill="#cfd0d2"/>
      <path d="M14 22.5 Q17 19.5 20.5 21.5" fill="none" stroke="#1a78c8" stroke-width="2.6"/>
      <path d="M22 24.5 Q23.5 28 21 31" fill="none" stroke="#1a78c8" stroke-width="2.6"/>
      <path d="M17.5 32.5 Q13 32 12 27" fill="none" stroke="#1a78c8" stroke-width="2.6"/>
      <polygon points="19.5,19 23,22.5 18.5,23.5" fill="#1a78c8"/>
      <polygon points="23.5,29 20.5,33.5 19,29.5" fill="#1a78c8"/>
      <polygon points="10,28.5 14.5,27 12.5,23.5" fill="#1a78c8"/></svg>
<svg class="abs" style="left:992px;top:435px;" width="13" height="20" viewBox="0 0 13 20"><path d="M0.5 0.5 V16 L4 12.6 L6.6 18.3 L9.2 17.2 L6.7 11.6 H11.5 Z" fill="#fff" stroke="#000" stroke-width="1"/></svg>
<svg class="abs" style="left:15px;top:740px;" width="18" height="18" viewBox="0 0 18 18"><polygon points="0.5,2.6 7.2,1.7 7.2,8.2 0.5,8.2" fill="#fff"/>
      <polygon points="8.2,1.5 17.2,0.3 17.2,8.2 8.2,8.2" fill="#fff"/>
      <polygon points="0.5,9.2 7.2,9.2 7.2,15.7 0.5,14.9" fill="#fff"/>
      <polygon points="8.2,9.2 17.2,9.2 17.2,17 8.2,15.9" fill="#fff"/></svg>
<svg class="abs" style="left:59px;top:741px;" width="18" height="17" viewBox="0 0 18 17"><circle cx="11" cy="6.5" r="5.3" fill="none" stroke="#222" stroke-width="1.4"/><path d="M7.2 10.3 L1 16.5" stroke="#222" stroke-width="1.6"/></svg>
<svg class="abs" style="left:383px;top:740px;" width="18" height="17" viewBox="0 0 18 17"><path d="M1.6 3 V1.2 H10.4 V3 M1.6 13.5 V15.3 H10.4 V13.5" fill="none" stroke="#fff" stroke-width="1.1"/>
      <rect x="1.6" y="5.2" width="8.8" height="6" fill="none" stroke="#fff" stroke-width="1.1"/>
      <path d="M15.3 0.5 V16" stroke="#fff" stroke-width="1.1"/><rect x="14" y="5" width="2.8" height="2.8" fill="#fff"/></svg>
<svg class="abs" style="left:431px;top:738px;" width="24" height="21" viewBox="0 0 24 21"><path d="M1 2.5 Q1 1 2.5 1 H8.5 L10.5 3 H21.5 Q23 3 23 4.5 V19 Q23 20 22 20 H2 Q1 20 1 19 Z" fill="#f2c55c" stroke="#b58a33" stroke-width="0.8"/>
      <rect x="1" y="5" width="22" height="15" fill="#f7d46e"/>
      <path d="M5.5 19.5 V13 Q5.5 11 7.5 11 H16.5 Q18.5 11 18.5 13 V19.5 H14.5 V15 H9.5 V19.5 Z" fill="#3d86d4"/></svg>
<svg class="abs" style="left:420px;top:766px;" width="47" height="1" viewBox="0 0 47 1"><rect width="47" height="1" fill="#3f6c8e"/></svg>
<svg class="abs" style="left:826px;top:742px;" width="18" height="14" viewBox="0 0 18 14"><rect x="3.5" y="2.5" width="13.5" height="8" fill="none" stroke="#fff" stroke-width="1.1"/>
      <rect x="0.5" y="0.5" width="4" height="4" fill="#0a1622" stroke="#fff" stroke-width="1"/>
      <path d="M10 10.5 V13 M6 13.3 H14" stroke="#fff" stroke-width="1.1"/></svg>
<svg class="abs" style="left:850px;top:742px;" width="17" height="14" viewBox="0 0 17 14"><path d="M1 4.5 H4 L8 1 V13 L4 9.5 H1 Z" fill="none" stroke="#fff" stroke-width="1.1"/>
      <path d="M10.5 4.5 Q12 7 10.5 9.5 M12.8 2.8 Q15.3 7 12.8 11.2 M15 1 Q18.5 7 15 13" fill="none" stroke="#fff" stroke-width="1.1"/></svg>
<svg class="abs" style="left:983px;top:740px;" width="25" height="25" viewBox="0 0 25 25"><path d="M0.5 1 H16 V12.5 H6.5 L2.8 16 V12.5 H0.5 Z" fill="#fff"/>
      <rect x="3" y="3.5" width="10.5" height="1.2" fill="#05131d"/><rect x="3" y="6.2" width="10.5" height="1.2" fill="#05131d"/><rect x="3" y="8.9" width="10.5" height="1.2" fill="#05131d"/>
      <circle cx="15.6" cy="15.7" r="8" fill="#3c3c3c" stroke="#05131d" stroke-width="1.3"/>
      <path d="M13.8 12.6 L16.2 11.2 V20.3" stroke="#fff" stroke-width="1.8" fill="none"/></svg>
<svg class="abs" style="left:1018px;top:729px;" width="1" height="38" viewBox="0 0 1 38"><rect width="1" height="38" fill="#4a5560"/></svg>
<div class="tx" style="left:240.30px;top:84.84px;font-size:12px;color:#000;transform:scaleX(0.8650);transform-origin:0.00px 0;">This PC</div>
<div class="tx" style="left:149.70px;top:111.84px;font-size:12px;color:#fff;transform:scaleX(0.8799);transform-origin:0.00px 0;">File</div>
<div class="tx" style="left:200.50px;top:111.84px;font-size:12px;color:#262626;transform:scaleX(0.9489);transform-origin:0.00px 0;">Computer</div>
<div class="tx" style="left:280.70px;top:111.84px;font-size:12px;color:#262626;transform:scaleX(0.9186);transform-origin:0.00px 0;">View</div>
<div class="tx" style="left:276.40px;top:140.84px;font-size:12px;color:#000;transform:scaleX(0.8905);transform-origin:0.00px 0;">This PC</div>
<div class="tx" style="left:709.70px;top:140.84px;font-size:12px;color:#6d6d6d;transform:scaleX(0.9009);transform-origin:0.00px 0;">Search This PC</div>
<div class="clipx" style="left:130px;width:140px"><div class="tx" style="left:53.20px;top:170.84px;font-size:12px;color:#000;letter-spacing:-0.071px;">Downloads</div></div>
<div class="clipx" style="left:130px;width:140px"><div class="tx" style="left:53.20px;top:194.84px;font-size:12px;color:#000;">Documents</div></div>
<div class="clipx" style="left:130px;width:140px"><div class="tx" style="left:53.20px;top:218.84px;font-size:12px;color:#000;transform:scaleX(0.9574);transform-origin:0.00px 0;">Pictures</div></div>
<div class="clipx" style="left:130px;width:140px"><div class="tx" style="left:45.40px;top:250.84px;font-size:12px;color:#000;transform:scaleX(0.8929);transform-origin:0.00px 0;">This PC</div></div>
<div class="clipx" style="left:130px;width:140px"><div class="tx" style="left:53.20px;top:274.84px;font-size:12px;color:#000;transform:scaleX(0.9502);transform-origin:0.00px 0;">3D Objects</div></div>
<div class="clipx" style="left:130px;width:140px"><div class="tx" style="left:53.20px;top:298.84px;font-size:12px;color:#000;transform:scaleX(0.9538);transform-origin:0.00px 0;">Desktop</div></div>
<div class="clipx" style="left:130px;width:140px"><div class="tx" style="left:53.20px;top:322.84px;font-size:12px;color:#000;">Documents</div></div>
<div class="clipx" style="left:130px;width:140px"><div class="tx" style="left:53.20px;top:346.84px;font-size:12px;color:#000;letter-spacing:-0.071px;">Downloads</div></div>
<div class="clipx" style="left:130px;width:140px"><div class="tx" style="left:53.20px;top:370.84px;font-size:12px;color:#000;">Music</div></div>
<div class="clipx" style="left:130px;width:140px"><div class="tx" style="left:53.20px;top:394.84px;font-size:12px;color:#000;transform:scaleX(0.9574);transform-origin:0.00px 0;">Pictures</div></div>
<div class="clipx" style="left:130px;width:140px"><div class="tx" style="left:53.20px;top:418.84px;font-size:12px;color:#000;transform:scaleX(0.9459);transform-origin:0.00px 0;">Videos</div></div>
<div class="clipx" style="left:130px;width:140px"><div class="tx" style="left:53.20px;top:442.84px;font-size:12px;color:#000;transform:scaleX(0.9405);transform-origin:0.00px 0;">Local Disk (C:)</div></div>
<div class="clipx" style="left:130px;width:140px"><div class="tx" style="left:53.20px;top:466.84px;font-size:12px;color:#000;letter-spacing:-0.105px;">EspaceCollaboratif-Rugby</div></div>
<div class="clipx" style="left:130px;width:140px"><div class="tx" style="left:53.20px;top:490.84px;font-size:12px;color:#000;transform:scaleX(0.9680);transform-origin:0.00px 0;">Echange-Rugby</div></div>
<div class="clipx" style="left:130px;width:140px"><div class="tx" style="left:53.20px;top:514.84px;font-size:12px;color:#000;letter-spacing:0.138px;">Documentation</div></div>
<div class="clipx" style="left:130px;width:140px"><div class="tx" style="left:52.20px;top:538.84px;font-size:12px;color:#000;letter-spacing:0.3px;">I.part (\\m2l-srv-fic\M2L\perso$) (P:)</div></div>
<div class="clipx" style="left:130px;width:140px"><div class="tx" style="left:53.20px;top:562.84px;font-size:12px;color:#000;transform:scaleX(0.95);transform-origin:0 0;">Ressources-Rugby (\\m2l-srv-fic\M2L\Ligues\Rugby)</div></div>
<div class="clipx" style="left:130px;width:140px"><div class="tx" style="left:45.40px;top:594.84px;font-size:12px;color:#000;letter-spacing:-0.068px;">Network</div></div>
<div class="clipy" style="top:165px"><div class="tx" style="left:361.30px;top:-11.16px;font-size:12px;color:#000;transform:scaleX(0.9502);transform-origin:0.00px 0;">3D Objects</div></div>
<div class="clipy" style="top:165px"><div class="tx" style="left:615.70px;top:-11.16px;font-size:12px;color:#000;transform:scaleX(0.9538);transform-origin:0.00px 0;">Desktop</div></div>
<div class="tx" style="left:361.30px;top:210.14px;font-size:12px;color:#000;letter-spacing:-0.049px;">Documents</div>
<div class="tx" style="left:615.70px;top:210.14px;font-size:12px;color:#000;letter-spacing:-0.071px;">Downloads</div>
<div class="tx" style="left:361.30px;top:266.14px;font-size:12px;color:#000;">Music</div>
<div class="tx" style="left:615.70px;top:266.14px;font-size:12px;color:#000;transform:scaleX(0.9528);transform-origin:0.00px 0;">Pictures</div>
<div class="tx" style="left:361.30px;top:322.14px;font-size:12px;color:#000;transform:scaleX(0.9431);transform-origin:0.00px 0;">Videos</div>
<div class="tx" style="left:311.00px;top:370.88px;font-size:15.5px;color:#1e3a70;transform:scaleX(0.9364);transform-origin:1.00px 0;">Devices and drives (2)</div>
<div class="tx" style="left:361.30px;top:397.84px;font-size:12px;color:#000;transform:scaleX(0.9405);transform-origin:0.00px 0;">Local Disk (C:)</div>
<div class="tx" style="left:361.30px;top:428.84px;font-size:12px;color:#6d6d6d;transform:scaleX(0.9112);transform-origin:0.00px 0;">26.1 GB free of 49.4 GB</div>
<div class="tx" style="left:615.70px;top:405.84px;font-size:12px;color:#000;transform:scaleX(0.9278);transform-origin:0.00px 0;">CD Drive (D:)</div>
<div class="tx" style="left:311.00px;top:453.88px;font-size:15.5px;color:#1e3a70;transform:scaleX(0.9680);transform-origin:1.00px 0;">Network locations (5)</div>
<div class="tx" style="left:361.30px;top:482.34px;font-size:12px;color:#000;letter-spacing:-0.105px;">EspaceCollaboratif-Rugby</div>
<div class="tx" style="left:361.30px;top:497.34px;font-size:12px;color:#000;letter-spacing:0.247px;">(\\m2l-srv-fic\M2L\Ligues\Rugby...</div>
<div class="tx" style="left:615.70px;top:482.34px;font-size:12px;color:#000;letter-spacing:-0.213px;">Echange-Rugby</div>
<div class="tx" style="left:615.70px;top:497.34px;font-size:12px;color:#000;letter-spacing:0.247px;">(\\m2l-srv-fic\M2L\Ligues\Rugby...</div>
<div class="tx" style="left:361.30px;top:538.34px;font-size:12px;color:#000;letter-spacing:0.163px;">Documentation</div>
<div class="tx" style="left:361.30px;top:553.34px;font-size:12px;color:#000;letter-spacing:0.253px;">(\\m2l-srv-fic\M2L) (N:)</div>
<div class="tx" style="left:614.70px;top:538.34px;font-size:12px;color:#000;letter-spacing:0.192px;">I.part (\\m2l-srv-fic\M2L\perso$)</div>
<div class="tx" style="left:615.70px;top:553.34px;font-size:12px;color:#000;transform:scaleX(0.8896);transform-origin:0.00px 0;">(P:)</div>
<div class="tx" style="left:361.30px;top:594.34px;font-size:12px;color:#000;transform:scaleX(0.9477);transform-origin:0.00px 0;">Ressources-Rugby</div>
<div class="tx" style="left:361.30px;top:609.34px;font-size:12px;color:#000;letter-spacing:0.247px;">(\\m2l-srv-fic\M2L\Ligues\Rugby...</div>
<div class="tx" style="left:144.70px;top:649.84px;font-size:12px;color:#262626;transform:scaleX(0.9481);transform-origin:0.00px 0;">14 items</div>
<div class="tx" style="left:209.30px;top:649.84px;font-size:12px;color:#262626;letter-spacing:-0.131px;">1 item selected</div>
<div class="tx" style="left:88.60px;top:742.73px;font-size:14.5px;color:#3a3a3a;letter-spacing:-0.072px;">Type here to search</div>
<div class="tx" style="left:877.40px;top:734.54px;font-size:12px;color:#fff;transform:scaleX(0.8648);transform-origin:0.00px 0;">ENG</div>
<div class="tx" style="left:882.00px;top:751.14px;font-size:12px;color:#fff;transform:scaleX(0.7961);transform-origin:0.00px 0;">FR</div>
<div class="tx" style="left:916.80px;top:733.54px;font-size:12px;color:#fff;transform:scaleX(0.9532);transform-origin:0.00px 0;">9:58 AM</div>
<div class="tx" style="left:913.30px;top:751.14px;font-size:12px;color:#fff;transform:scaleX(0.9681);transform-origin:0.00px 0;">3/14/2024</div>
<div class="tx" style="left:9.20px;top:60.84px;font-size:12px;color:#fff;transform:scaleX(0.9492);transform-origin:0.00px 0;text-shadow:0 0 1px #000,0 0 1px #000,1px 1px 2px #000,1px 1px 2px #000,0 1px 3px #000;">Recycle Bin</div>
</body></html>
